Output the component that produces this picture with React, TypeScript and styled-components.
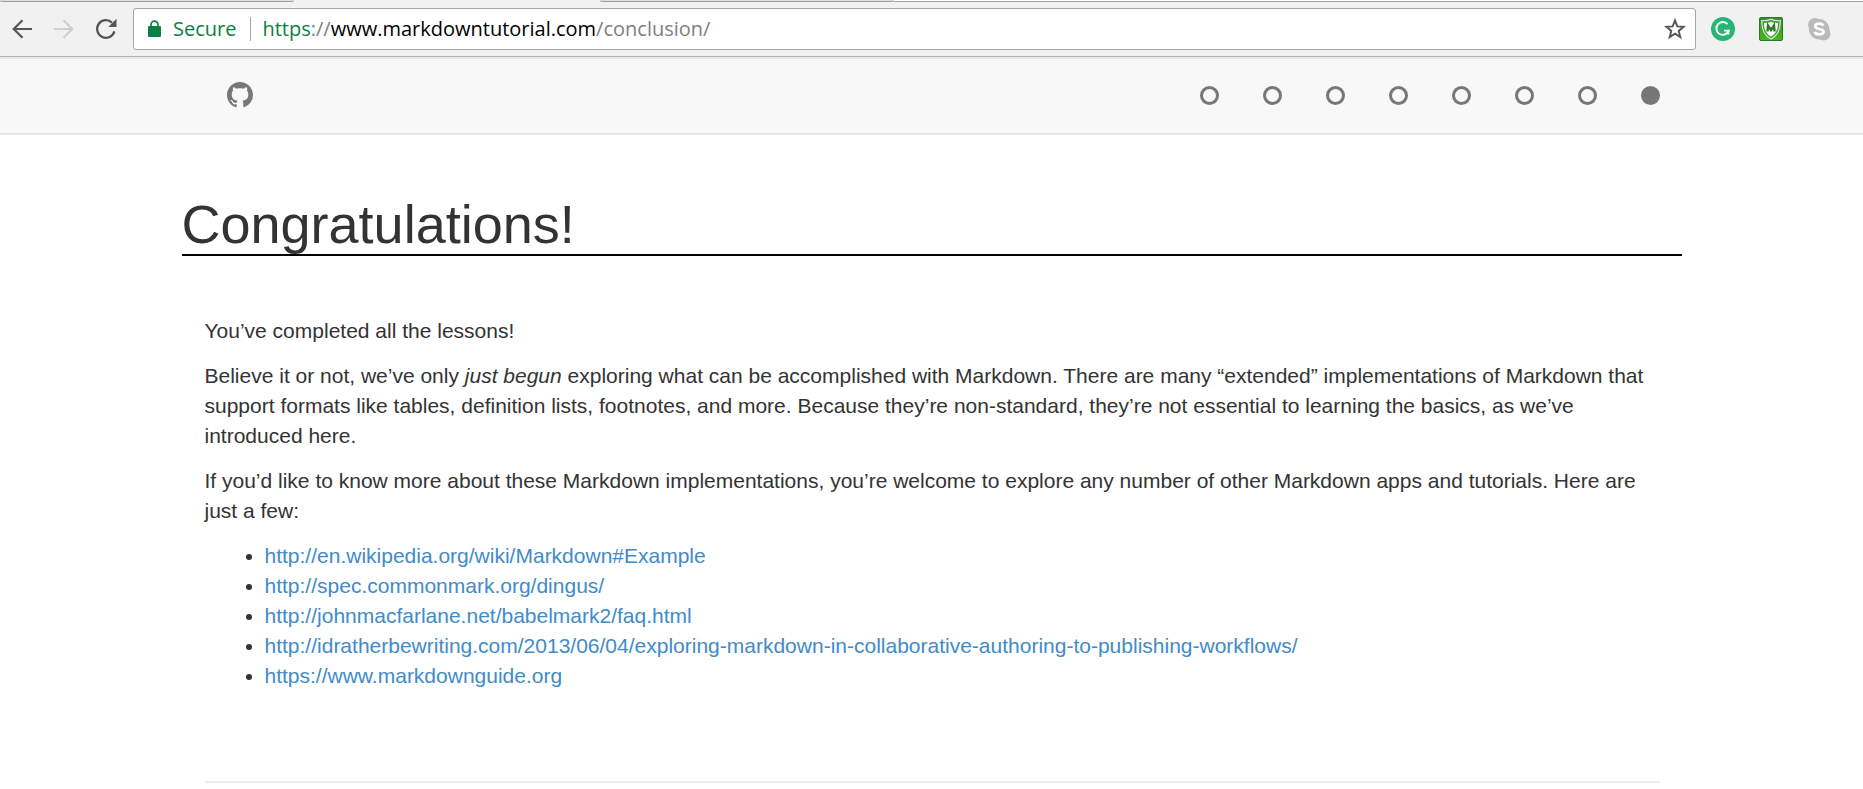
import React from "react";
import styled, { createGlobalStyle } from "styled-components";

const GlobalStyle = createGlobalStyle`
  *, *::before, *::after { box-sizing: border-box; }
  body {
    margin: 0;
    background: #fff;
    color: #333;
    font: 21px/30px "Liberation Sans", Arial, sans-serif;
  }
`;

const TabStrip = styled.div`
  display: flex;
  height: 2px;
  background: #f1f1f1;
`;

const TabEdge = styled.div<{ $kind: "tab" | "active" | "rest" }>`
  flex: ${(p) => (p.$kind === "rest" ? "1" : "none")};
  width: ${(p) => (p.$kind === "active" ? 306 : 294)}px;
  background: ${(p) => (p.$kind === "tab" ? "#dcdcdc" : p.$kind === "rest" ? "#fff" : "#f1f1f1")};
  border-bottom: ${(p) => (p.$kind === "active" ? "none" : "1px solid #a0a0a0")};
  border-radius: ${(p) => (p.$kind === "tab" ? "0 0 2px 2px" : "0")};
`;

const Toolbar = styled.div`
  display: flex;
  align-items: center;
  padding: 6px 32px 6px 0;
  background: #f1f1f1;
  border-bottom: 1px solid #b2b2b2;
`;

const NavButtons = styled.div`
  display: flex;
  flex: none;
  padding: 0 6px 0 1px;
`;

const IconButton = styled.button`
  display: flex;
  align-items: center;
  justify-content: center;
  width: 42px;
  height: 40px;
  padding: 0;
  border: 0;
  background: none;
  color: #555;
  &:disabled { color: #cfcfcf; }
`;

const AddressBar = styled.div`
  display: flex;
  flex: 1;
  align-items: center;
  min-width: 0;
  height: 42px;
  padding: 0 9px 0 14px;
  border: 1px solid #a6a6a6;
  border-radius: 3px;
  background: #fff;
  font: 20px/28px "Open Sans", "Noto Sans", sans-serif;
`;

const Secure = styled.span`
  display: flex;
  align-items: center;
  gap: 12px;
  padding-right: 14px;
  margin-right: 11px;
  border-right: 1px solid #a6a6a6;
  color: #0b8043;
  line-height: 24px;
`;

const Url = styled.span`
  flex: 1;
  color: #808080;
  white-space: nowrap;
`;

const Scheme = styled.span`
  color: #0b8043;
`;

const Host = styled.span`
  color: #000;
`;

const StarButton = styled(IconButton)`
  width: 22px;
`;

const Extensions = styled.div`
  display: flex;
  gap: 24px;
  padding-left: 15px;
`;

const ExtensionButton = styled(IconButton)`
  width: 24px;
`;

const Navbar = styled.header`
  background: #f8f8f8;
  border-top: 2px solid #e7e7e7;
  border-bottom: 2px solid #e7e7e7;
`;

const Container = styled.div`
  width: 100%;
  max-width: 1500px;
  margin: 0 auto;
`;

const NavRow = styled(Container)`
  display: flex;
  align-items: center;
  justify-content: space-between;
  height: 74px;
  padding: 0 22px 2px 45px;
`;

const HomeLink = styled.a`
  display: flex;
  color: #777;
`;

const Steps = styled.nav`
  display: flex;
  gap: 44px;
`;

const Step = styled.a<{ $current?: boolean }>`
  width: 19px;
  height: 19px;
  border: 3px solid #777;
  border-radius: 50%;
  background: ${(p) => (p.$current ? "#777" : "transparent")};
`;

const Title = styled.h1`
  margin: 60px 0;
  border-bottom: 2px solid #000;
  font-size: 54px;
  font-weight: 400;
  line-height: 59px;
`;

const Lesson = styled.article`
  padding: 0 22px 0 23px;
`;

const Paragraph = styled.p`
  margin: 0 0 15px;
`;

const LinkList = styled.ul`
  margin: 0;
  padding: 0 0 0 60px;
`;

const LessonLink = styled.a`
  color: #428bca;
  text-decoration: none;
`;

const Divider = styled.hr`
  margin: 90px 0 0;
  border: 0;
  border-top: 2px solid #eee;
`;

const steps = ["Introduction", "Italics and bold", "Headers", "Links", "Images", "Blockquotes", "Lists", "Conclusion"];

const links = [
  "http://en.wikipedia.org/wiki/Markdown#Example",
  "http://spec.commonmark.org/dingus/",
  "http://johnmacfarlane.net/babelmark2/faq.html",
  "http://idratherbewriting.com/2013/06/04/exploring-markdown-in-collaborative-authoring-to-publishing-workflows/",
  "https://www.markdownguide.org",
];

const BackIcon = () => (
  <svg width="20" height="20" viewBox="0 0 20 20" fill="none" stroke="currentColor" strokeWidth="2.2">
    <path d="M20 10H2M10.5 1.2 1.7 10l8.8 8.8" />
  </svg>
);

const ForwardIcon = () => (
  <svg width="20" height="20" viewBox="0 0 20 20" fill="none" stroke="currentColor" strokeWidth="2.2">
    <path d="M0 10h18M9.5 1.2l8.8 8.8-8.8 8.8" />
  </svg>
);

const ReloadIcon = () => (
  <svg width="22" height="22" viewBox="0 0 22 22" fill="none">
    <path d="M19.400 13.400A8.800 8.800 0 1 1 17 4.600" stroke="currentColor" strokeWidth="2.3" />
    <path d="M21.500 .8v8.200h-8.200z" fill="currentColor" />
  </svg>
);

const LockIcon = () => (
  <svg width="13" height="18" viewBox="0 0 13 18">
    <path d="M3 7V4.600a3.500 3.500 0 0 1 7 0V7" fill="none" stroke="#0b8043" strokeWidth="1.700" />
    <rect y="6" width="13" height="11" rx="1" fill="#0b8043" />
  </svg>
);

const StarIcon = () => (
  <svg width="22" height="22" viewBox="0 0 22 22" fill="none" stroke="currentColor" strokeWidth="1.900">
    <path d="M11 2.400l2.300 6 6.300.4-4.900 4.100 1.600 6.200L11 15.600l-5.300 3.500 1.600-6.200-4.900-4.100 6.300-.4z" />
  </svg>
);

const GrammarIcon = () => (
  <svg width="24" height="24" viewBox="0 0 24 24">
    <circle cx="12" cy="12" r="12" fill="#26b573" />
    <path d="M16.600 7.200A6.400 6.400 0 1 0 17.800 13.600H13" fill="none" stroke="#fff" strokeWidth="1.900" />
    <path d="M17.400 13v4.600" stroke="#fff" strokeWidth="1.900" />
  </svg>
);

const ShieldIcon = () => (
  <svg width="24" height="24" viewBox="0 0 24 24">
    <defs>
      <linearGradient id="shieldGreen" x1="0" y1="0" x2="0" y2="1">
        <stop offset="0" stopColor="#3a8c3a" />
        <stop offset="1" stopColor="#46b514" />
      </linearGradient>
    </defs>
    <rect x=".5" y=".5" width="23" height="23" rx="1.500" fill="url(#shieldGreen)" stroke="#2a7a20" />
    <path d="M12 2.200c3 1.300 6 1.700 9.200 1.500.2 9-2 14.500-9.200 18.300C4.800 18.200 2.600 12.700 2.800 3.700c3.200.2 6.200-.2 9.200-1.500z" fill="#4c9e45" stroke="#dcebd8" strokeWidth="1.200" />
    <path d="M12 4.700c2.400 1 4.700 1.300 7 1.300-.1 6.500-1.700 10.500-7 13.600C6.700 16.500 5.100 12.500 5 6c2.300 0 4.600-.3 7-1.300z" fill="#f4faf2" />
    <path d="M8.500 14.500 9 8.500l3 4.500 3-4.500.5 6" fill="none" stroke="#2b7a26" strokeWidth="2.400" />
  </svg>
);

const ChatIcon = () => (
  <svg width="24" height="24" viewBox="0 0 24 24">
    <circle cx="7.800" cy="7.800" r="6.800" fill="#bababa" />
    <circle cx="16.700" cy="16.700" r="6.800" fill="#bababa" />
    <circle cx="12.200" cy="12.200" r="10.300" fill="#bababa" />
    <path d="M16.300 8.800C15.600 7.200 14 6.600 12.300 6.600c-2.400 0-4 1-4 2.600 0 3.700 8.200 1.900 8.200 5.500 0 1.700-1.800 2.700-4.200 2.700-2.200 0-3.900-.8-4.500-2.600" fill="none" stroke="#fff" strokeWidth="2.800" />
  </svg>
);

const GitHubIcon = () => (
  <svg width="26" height="26" viewBox="0 0 16 16" fill="currentColor">
    <path d="M8 0C3.580 0 0 3.580 0 8c0 3.540 2.290 6.530 5.470 7.590.4.070.55-.17.55-.38 0-.19-.01-.82-.01-1.490-2.010.37-2.530-.49-2.690-.94-.09-.23-.48-.94-.82-1.130-.28-.15-.68-.52-.01-.53.63-.01 1.080.58 1.230.82.72 1.210 1.870.87 2.330.66.07-.52.28-.87.51-1.070-1.780-.2-3.640-.89-3.640-3.950 0-.87.31-1.590.82-2.150-.08-.2-.36-1.020.08-2.120 0 0 .67-.21 2.200.82.64-.18 1.320-.27 2-.27s1.360.09 2 .27c1.530-1.040 2.200-.82 2.200-.82.44 1.100.16 1.920.08 2.120.51.56.82 1.270.82 2.150 0 3.070-1.870 3.750-3.650 3.950.29.25.54.73.54 1.480 0 1.070-.01 1.930-.01 2.200 0 .21.15.46.55.38A8.010 8.010 0 0 0 16 8c0-4.420-3.580-8-8-8z" />
  </svg>
);

export default function App() {
  return (
    <>
      <GlobalStyle />
      <TabStrip>
        <TabEdge $kind="tab" />
        <TabEdge $kind="active" />
        <TabEdge $kind="tab" />
        <TabEdge $kind="rest" />
      </TabStrip>
      <Toolbar>
        <NavButtons>
          <IconButton aria-label="Back"><BackIcon /></IconButton>
          <IconButton aria-label="Forward" disabled><ForwardIcon /></IconButton>
          <IconButton aria-label="Reload"><ReloadIcon /></IconButton>
        </NavButtons>
        <AddressBar>
          <Secure><LockIcon />Secure</Secure>
          <Url>
            <Scheme>https</Scheme>://<Host>www.markdowntutorial.com</Host>/conclusion/
          </Url>
          <StarButton aria-label="Bookmark this page"><StarIcon /></StarButton>
        </AddressBar>
        <Extensions>
          <ExtensionButton aria-label="Grammar checker"><GrammarIcon /></ExtensionButton>
          <ExtensionButton aria-label="Web protection"><ShieldIcon /></ExtensionButton>
          <ExtensionButton aria-label="Chat"><ChatIcon /></ExtensionButton>
        </Extensions>
      </Toolbar>
      <Navbar>
        <NavRow>
          <HomeLink href="#" aria-label="GitHub"><GitHubIcon /></HomeLink>
          <Steps aria-label="Lessons">
            {steps.map((name, i) => (
              <Step key={name} href="#" aria-label={name} $current={i === steps.length - 1} />
            ))}
          </Steps>
        </NavRow>
      </Navbar>
      <Container as="main">
        <Title>Congratulations!</Title>
        <Lesson>
          <Paragraph>You’ve completed all the lessons!</Paragraph>
          <Paragraph>
            Believe it or not, we’ve only <em>just begun</em> exploring what can be accomplished with
            Markdown. There are many “extended” implementations of Markdown that support formats like
            tables, definition lists, footnotes, and more. Because they’re non-standard, they’re not
            essential to learning the basics, as we’ve introduced here.
          </Paragraph>
          <Paragraph>
            If you’d like to know more about these Markdown implementations, you’re welcome to explore
            any number of other Markdown apps and tutorials. Here are just a few:
          </Paragraph>
          <LinkList>
            {links.map((url) => (
              <li key={url}><LessonLink href={url}>{url}</LessonLink></li>
            ))}
          </LinkList>
          <Divider />
        </Lesson>
      </Container>
    </>
  );
}
